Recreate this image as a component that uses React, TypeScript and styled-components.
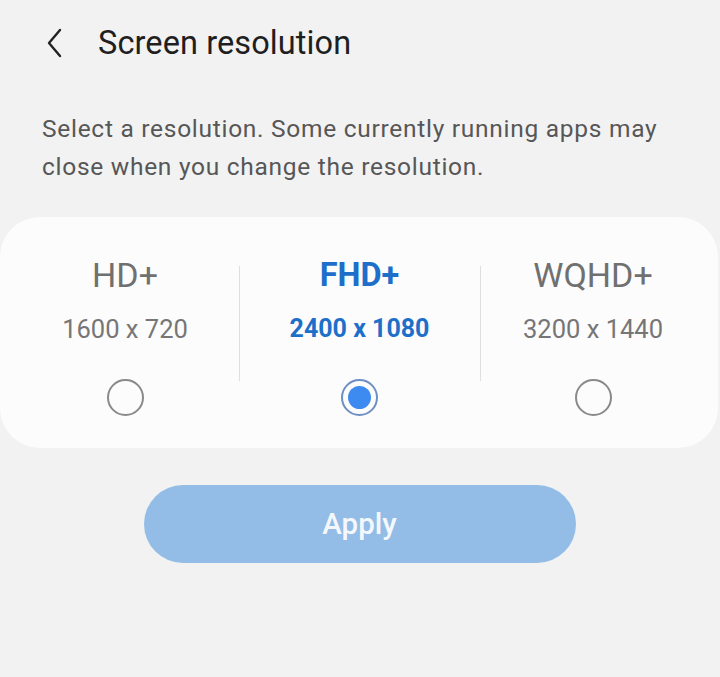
import styled, { createGlobalStyle } from 'styled-components';

const GlobalStyle = createGlobalStyle`
  html, body {
    margin: 0;
    padding: 0;
    background: #f2f2f2;
  }
  body {
    font-family: Roboto, "Noto Sans", sans-serif;
  }
`;

type Option = { name: string; size: string; selected?: boolean };

const options: Option[] = [
  { name: 'HD+', size: '1600 x 720' },
  { name: 'FHD+', size: '2400 x 1080', selected: true },
  { name: 'WQHD+', size: '3200 x 1440' },
];

const Screen = styled.div`
  width: 720px;
  height: 677px;
  background: #f2f2f2;
  display: flex;
  flex-direction: column;
  overflow: hidden;
`;

const Header = styled.header`
  display: flex;
  align-items: center;
  height: 86px;
  padding-left: 41px;
  gap: 29px;
`;

const BackButton = styled.button`
  border: none;
  background: none;
  padding: 0;
  width: 28px;
  height: 40px;
  display: flex;
  align-items: center;
  justify-content: center;
  cursor: pointer;
`;

const Title = styled.h1`
  margin: 0;
  font-size: 32.5px;
  font-weight: 400;
  color: #1f1f1f;
  letter-spacing: 0.1px;
`;

const Description = styled.p`
  margin: 24px 0 0 42px;
  font-size: 24.5px;
  line-height: 38px;
  color: #575757;
  letter-spacing: 0.72px;
  white-space: nowrap;
`;

const Card = styled.div`
  margin: 31px 2px 0 0;
  padding: 0 12px 0 11px;
  height: 231px;
  background: #fcfcfc;
  border-radius: 40px;
  display: grid;
  grid-template-columns: 228px 241px 226px;
  align-items: center;
`;

const Column = styled.div<{ $divider: boolean }>`
  position: relative;
  display: flex;
  flex-direction: column;
  align-items: center;
  height: 100%;
  padding-top: 38px;
  box-sizing: border-box;

  &::before {
    content: '';
    display: ${(p) => (p.$divider ? 'block' : 'none')};
    position: absolute;
    left: 0;
    top: 49px;
    height: 115px;
    width: 1px;
    background: #dedede;
  }
`;

const Name = styled.div<{ $active?: boolean }>`
  font-size: ${(p) => (p.$active ? 32.5 : 34)}px;
  line-height: 40px;
  font-weight: ${(p) => (p.$active ? 700 : 400)};
  color: ${(p) => (p.$active ? '#1d6fc9' : '#707070')};
`;

const Size = styled.div<{ $active?: boolean }>`
  margin-top: 19px;
  font-size: ${(p) => (p.$active ? 25 : 25.5)}px;
  line-height: 30px;
  font-weight: ${(p) => (p.$active ? 700 : 400)};
  color: ${(p) => (p.$active ? '#1d6fc9' : '#767676')};
`;

const Radio = styled.span<{ $checked?: boolean }>`
  margin-top: 35px;
  width: 37px;
  height: 37px;
  box-sizing: border-box;
  border-radius: 50%;
  border: 2px solid ${(p) => (p.$checked ? '#6e8fc4' : '#8a8a8a')};
  display: flex;
  align-items: center;
  justify-content: center;

  &::after {
    content: '';
    display: ${(p) => (p.$checked ? 'block' : 'none')};
    width: 23px;
    height: 23px;
    border-radius: 50%;
    background: #3d8bf0;
  }
`;

const ApplyButton = styled.button`
  align-self: center;
  margin: 37px 0 0 -1px;
  width: 432px;
  height: 78px;
  border: none;
  border-radius: 39px;
  background: #93bde6;
  color: #f4f8fc;
  font-family: Roboto, "Noto Sans", sans-serif;
  font-size: 29.5px;
  font-weight: 500;
  cursor: pointer;
`;

export default function App() {
  return (
    <Screen>
      <GlobalStyle />
      <Header>
        <BackButton aria-label="Back">
          <svg width="20" height="30" viewBox="0 0 20 30">
            <path d="M15 2 L4 15 L15 28" fill="none" stroke="#222" strokeWidth="2.4" strokeLinecap="round" strokeLinejoin="round" />
          </svg>
        </BackButton>
        <Title>Screen resolution</Title>
      </Header>
      <Description>
        Select a resolution. Some currently running apps may
        <br />
        close when you change the resolution.
      </Description>
      <Card>
        {options.map((o, i) => (
          <Column key={o.name} $divider={i > 0}>
            <Name $active={o.selected}>{o.name}</Name>
            <Size $active={o.selected}>{o.size}</Size>
            <Radio $checked={o.selected} />
          </Column>
        ))}
      </Card>
      <ApplyButton>Apply</ApplyButton>
    </Screen>
  );
}
